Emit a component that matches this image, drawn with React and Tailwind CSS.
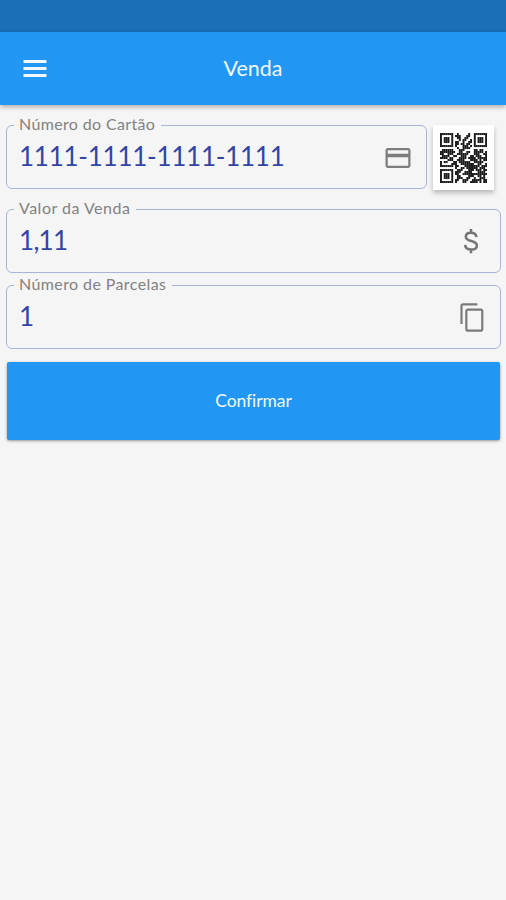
import clsx from 'clsx';

const QR_ROWS = [
  '1111111001000001001111111',
  '1000001011100011001000001',
  '1011101001100110001011101',
  '1011101000101100101011101',
  '1011101011001001101011101',
  '1000001011011011001000001',
  '1111111010001110101111111',
  '0000000001001111000000000',
  '0111111000111000001101100',
  '1111111100110011001111101',
  '1100111001111110001110011',
  '0111100110011100110111001',
  '1111011000111101111011111',
  '0000111001111000111101011',
  '1011000110111111001111100',
  '1000001110011111110011001',
  '1111111011000111111110111',
  '0000000010011011111101110',
  '1111111001110001110111011',
  '1000001011100111100011110',
  '1011101011001111111111111',
  '1011101001100001110011010',
  '1011101001110011001001110',
  '1000001011001110011111011',
  '1111111010001100111101011',
];

const MenuIcon = () => (
  <svg viewBox="0 0 24 17" className="h-[17px] w-6" fill="#f2f8fe">
    <path d="M.5 0h23v3H.5zM.5 7h23v3H.5zM.5 14h23v3H.5z" />
  </svg>
);

const CardIcon = () => (
  <svg viewBox="0 0 24 24" className="mt-px h-[30px] w-[30px]" fill="#7d7d7d">
    <path d="M20 4H4c-1.11 0-1.99.89-1.99 2L2 18c0 1.11.89 2 2 2h16c1.11 0 2-.89 2-2V6c0-1.11-.89-2-2-2zm.2 14.2H3.8v-6.9h16.4v6.9zm0-9.700H3.800V5.800h16.400v2.700z" />
  </svg>
);

const MoneyIcon = () => (
  <svg viewBox="0 0 24 24" className="h-8 w-8" fill="none" stroke="#757575" strokeWidth="1.9">
    <path d="M12 3v3M12 18v3.2M16.1 9c-.3-2-1.8-3.2-4.1-3.2-2.2 0-3.9 1.1-3.9 3 0 4.3 8.3 2.1 8.3 6.500 0 2-1.800 3.100-4.300 3.100-2.700 0-4.300-1.300-4.500-3.500" />
  </svg>
);

const CopyIcon = () => (
  <svg viewBox="0 0 24 24" className="h-[31px] w-[29px]" fill="#7a7a7a" preserveAspectRatio="none">
    <path d="M16 1H4c-1.1 0-2 .9-2 2v14h1.8V2.8H16V1zm3 4H8c-1.1 0-2 .9-2 2v14c0 1.1.9 2 2 2h11c1.1 0 2-.9 2-2V7c0-1.1-.9-2-2-2zm.2 16.2H7.8V6.800h11.400v14.400z" />
  </svg>
);

const QrCode = () => (
  <svg viewBox="0 0 25 25" preserveAspectRatio="none" className="h-[50px] w-[47px]" fill="#1c1c1c">
    {QR_ROWS.map((row, y) =>
      [...row].map((cell, x) =>
        cell === '1' ? <rect key={`${x}-${y}`} x={x} y={y} width="1.03" height="1.03" /> : null
      )
    )}
  </svg>
);

// Outlined text field, the legend cuts the notch in the border
const Field = ({ label, value, icon, className, legendClass, valueClass }) => (
  <fieldset className={clsx('h-[72px] min-w-0 rounded-md border border-[#a9b3d6]', className)}>
    <legend className={clsx('ml-[7px] h-[17px] whitespace-nowrap pl-[5px] text-base leading-[14px] text-[#828282]', legendClass)}>
      {label}
    </legend>
    <div className="flex h-[46px] items-center justify-between pl-3 pr-[13px]">
      <span className={clsx('text-[26px] leading-[44px] text-[#3345a3]', valueClass)}>{value}</span>
      {icon}
    </div>
  </fieldset>
);

export default function App() {
  return (
    <div className="flex min-h-screen flex-col bg-[#f5f5f5] font-['Lato','Open_Sans',sans-serif]">
      <div className="h-8 bg-[#1a6fb7]" />
      <header className="grid h-[73px] grid-cols-3 items-center bg-[#2196f3] px-[23px] shadow-[0_2px_5px_rgba(0,0,0,0.3)]">
        <MenuIcon />
        <h1 className="-mt-0.5 text-center text-[21.5px] leading-7 text-[#f2f8fe]">Venda</h1>
      </header>

      <main className="flex flex-col pl-1.5 pr-[5px] pt-3">
        <div className="flex items-start gap-1.5">
          <Field
            label="Número do Cartão"
            value="1111-1111-1111-1111"
            icon={<CardIcon />}
            className="flex-1"
            legendClass="w-[147px] tracking-[0.35px]"
            valueClass="-mt-0.5 tracking-[-0.25px]"
          />
          <div className="mr-[7px] mt-2 flex h-[65px] w-[61px] items-center justify-center bg-white shadow-[0_3px_5px_rgba(0,0,0,0.25)]">
            <QrCode />
          </div>
        </div>
        <Field
          label="Valor da Venda"
          value="1,11"
          icon={<MoneyIcon />}
          className="mt-[11px]"
          legendClass="w-[122px] tracking-[0.5px]"
          valueClass="-mt-0.5 tracking-[-0.7px]"
        />
        <Field
          label="Número de Parcelas"
          value="1"
          icon={<CopyIcon />}
          className="mt-1"
          legendClass="w-[158px] tracking-[0.4px]"
          valueClass="-mt-0.5"
        />
        <button className="mx-px mt-[13px] h-[78px] rounded-xs bg-[#2196f3] pt-px text-[17.5px] tracking-[-0.1px] text-[#f2f8fe] shadow-[0_1px_3px_rgba(0,0,0,0.4)]">
          Confirmar
        </button>
      </main>
    </div>
  );
}
